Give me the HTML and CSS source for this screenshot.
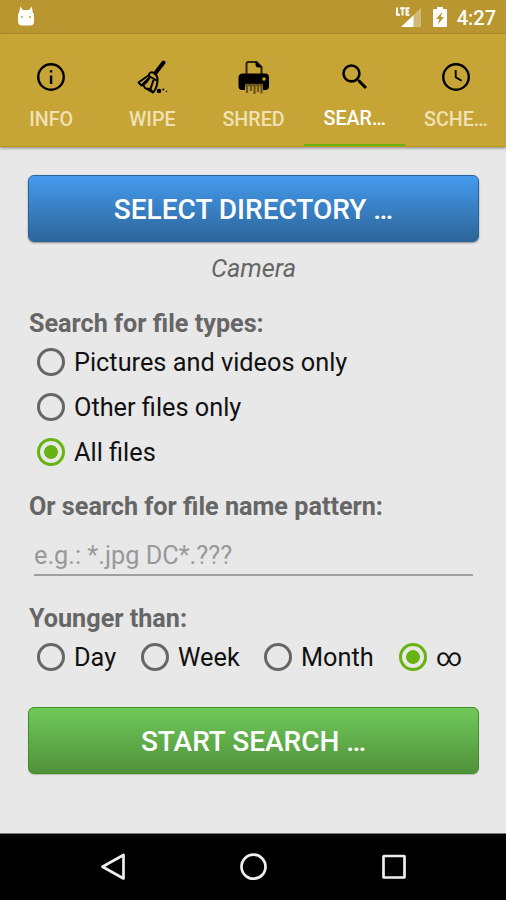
FILE: index.html
```html
<!DOCTYPE html>
<html lang="en">
<head>
<meta charset="utf-8">
<title>Search</title>
<link rel="stylesheet" href="styles.css">
</head>
<body>
<div class="screen">
  <header class="status">
    <svg class="status-cat" width="18" height="22" viewBox="0 0 18 22"><path fill="#fff" d="M3.200.5L6 4h6L14.800.5l1 6q1.200.8 1.200 2.500v6.500q0 4-4 4H5q-4 0-4-4V9q0-1.700 1.200-2.500z"/><circle cx="5" cy="11" r=".9" fill="#b9962f"/><circle cx="13" cy="11" r=".9" fill="#b9962f"/></svg>
    <div class="status-right">
      <svg width="26" height="22" viewBox="0 0 26 22"><path fill="#fff" fill-opacity=".35" d="M25 2v19H5z"/><path fill="#fff" d="M17.500 9.200V21H5z"/><path stroke="#b9962f" stroke-width="2" d="M14 0v11"/><path fill="none" stroke="#fff" stroke-width="1.900" d="M1 1.500v7.200h3M4 2.300h5M6.500 2.300v7.200M13.500 2.300h-3v6.400h3M10.500 5.500h2.600"/></svg>
      <svg class="battery" width="14" height="22" viewBox="0 0 14 22"><path fill="#fff" d="M4 1h6v2h3q1 0 1 1v16q0 1-1 1H1q-1 0-1-1V4q0-1 1-1h3z"/><path fill="#b9962f" d="M9.300 6L3 13h3.300l-1.600 5.500L11 11H7.700z"/></svg>
      <span class="time">4:27</span>
    </div>
  </header>
  <nav class="tabs">
    <div class="tab">
      <svg width="34" height="34" viewBox="0 0 24 24"><circle cx="12" cy="12" r="9" fill="none" stroke="#000" stroke-width="1.700"/><path d="M11.200 11h1.700v6h-1.700zM11.200 7.200h1.700v1.700h-1.700z"/></svg>
      <span>INFO</span>
    </div>
    <div class="tab">
      <svg width="34" height="34" viewBox="0 0 34 34" fill="none" stroke="#000" stroke-linejoin="round"><path stroke-width="4" stroke-linecap="round" d="M28.500 2.500L20.500 13"/><path stroke-width="2" d="M14 14q3-4 7 1 2 2 1.500 6l-8.500-5zM14 15L3.500 22.500l3 3L15 17M6.500 25.500q4-1 8-7.500M8.500 25.500l2 3 5 .5 3-9M15 29l3 3.500q4-4 4.500-11.500M11 28.500l6 3.500"/><circle cx="24" cy="31" r="2.300" fill="#000" stroke="none"/><circle cx="28.300" cy="29.500" r="1.100" fill="#000" stroke="none"/><circle cx="31.500" cy="31.500" r=".7" fill="#000" stroke="none"/></svg>
      <span>WIPE</span>
    </div>
    <div class="tab">
      <svg width="34" height="34" viewBox="0 0 34 34"><path fill="none" stroke="#2c2409" stroke-width="2" d="M9.500 14V4q0-2 2-2h8l5 5v7"/><path d="M18.500 1l7 6.500h-4q-3 0-3-3z"/><path d="M6 13.500h22q4 0 4 4V26q0 4-3.500 4H26v-5H8v5H5q-3.500 0-3.500-4v-8.500q0-4 4.500-4z"/><circle cx="27" cy="19" r="1.800" fill="#c6a435"/><path fill="none" stroke="#6b581b" stroke-width="2.300" d="M8 25h18M10 25v8M14 25v6M17.500 25v9M21 25v7M24.500 25v8.500"/></svg>
      <span>SHRED</span>
    </div>
    <div class="tab active">
      <svg width="34" height="34" viewBox="0 0 24 24"><path d="M15.500 14h-.79l-.28-.27A6.471 6.471 0 0 0 16 9.500 6.500 6.500 0 1 0 9.500 16c1.610 0 3.090-.59 4.230-1.570l.27.28v.79l5 4.990L20.490 19l-4.990-5zm-6 .2A4.700 4.700 0 1 1 9.500 4.800a4.700 4.700 0 0 1 0 9.400z"/></svg>
      <span>SEAR…</span>
    </div>
    <div class="tab">
      <svg width="34" height="34" viewBox="0 0 24 24" fill="none" stroke="#000"><circle cx="12" cy="12" r="9" stroke-width="1.700"/><path stroke-width="1.300" d="M11.800 7v5.200l4.200 2.500"/></svg>
      <span>SCHE…</span>
    </div>
  </nav>
  <main>
    <button class="btn blue">SELECT DIRECTORY …</button>
    <p class="folder">Camera</p>
    <h2 class="h-types">Search for file types:</h2>
    <div class="types">
      <label class="opt"><i class="radio"></i><span>Pictures and videos only</span></label>
      <label class="opt"><i class="radio"></i><span>Other files only</span></label>
      <label class="opt"><i class="radio on"></i><span>All files</span></label>
    </div>
    <h2 class="h-pattern">Or search for file name pattern:</h2>
    <div class="field">e.g.: *.jpg DC*.???</div>
    <h2 class="h-age">Younger than:</h2>
    <div class="ages">
      <label class="opt day"><i class="radio"></i><span>Day</span></label>
      <label class="opt week"><i class="radio"></i><span>Week</span></label>
      <label class="opt month"><i class="radio"></i><span>Month</span></label>
      <label class="opt"><i class="radio on"></i><span>∞</span></label>
    </div>
    <button class="btn green">START SEARCH …</button>
  </main>
  <footer class="navbar">
    <svg width="28" height="30" viewBox="0 0 28 30"><path d="M24.500 3v23.500L3.500 14.700z"/></svg>
    <svg width="28" height="30" viewBox="0 0 28 30"><circle cx="14.500" cy="14.700" r="12"/></svg>
    <svg width="28" height="30" viewBox="0 0 28 30"><rect x="4.500" y="4" width="21" height="21.500" rx=".5"/></svg>
  </footer>
</div>
</body>
</html>
```

FILE: styles.css
```css
* { box-sizing: border-box; }
body { margin: 0; font-family: Roboto, "Liberation Sans", sans-serif; background: #e8e8e8; }
.screen { width: 506px; height: 900px; display: flex; flex-direction: column; overflow: hidden; }
.status { height: 34px; background: #b9962f; display: flex; justify-content: space-between; padding: 6px 10px 0 17px; }
.status-right { display: flex; align-items: flex-start; }
.battery { margin: 0 10px 0 11px; }
.time { color: #fff; font-size: 20px; font-weight: 500; line-height: 24px; }
.tabs { height: 113px; background: #c6a435; display: flex; box-shadow: 0 1px 3px rgba(0,0,0,.45); border-bottom: 1px solid #bd9708; position: relative; }
.tab { flex: 1; display: flex; flex-direction: column; align-items: center; padding: 26px 0 0 1px; color: #f0e1b5; font-size: 19.700px; font-weight: 500; line-height: 24px; }
.tab span { margin-top: 14px; }
.tab.active { color: #fff; box-shadow: inset 0 -2px #66b312; }
.tab.active span { margin-top: 13px; }
main { height: 686px; padding: 28px 28px 0; display: flex; flex-direction: column; }
.btn { font: 500 28px/34px Roboto, sans-serif; color: #fff; width: 451px; height: 67px; flex: none; border-radius: 6px; padding: 0; }
.blue { background: linear-gradient(#459bee, #2c6599); border: 1px solid #28649b; box-shadow: 0 1px 2px rgba(0,0,0,.4); padding-top: 3px; }
.green { background: linear-gradient(#70c95a, #50913b); border: 1px solid #3d9220; box-shadow: 0 1px 1px rgba(0,0,0,.2); margin-top: 28px; padding-top: 2px; }
.folder { margin: 12px 0 0 1px; text-align: center; font-size: 25.300px; line-height: 30px; font-style: italic; color: #666; }
h2 { margin: 0 0 0 1px; font-size: 25.200px; line-height: 30px; font-weight: 700; color: #666; }
.h-types { margin-top: 25px; }
.opt { display: flex; align-items: center; height: 45px; font-size: 25.300px; line-height: 30px; color: #111; }
.opt span { padding-top: 2px; }
.types { padding-left: 9px; margin-top: 0; }
.radio { width: 28px; height: 28px; border: 3px solid #666; border-radius: 50%; flex: none; margin-right: 9px; }
.radio.on { border-color: #66b312; background: radial-gradient(circle, #66b312 6.500px, transparent 7.200px); }
.h-pattern { margin-top: 18px; }
.field { margin: 13px 5px 0 6px; height: 41px; padding-top: 6px; border-bottom: 2px solid #a0a0a0; font-size: 25.300px; line-height: 30px; color: #999; }
.h-age { margin-top: 28px; }
.ages { display: flex; padding-left: 9px; margin-top: 0; }
.day { width: 104px; } .week { width: 123px; } .month { width: 135px; }
.navbar { flex: 1; background: #000; border-top: 1px solid #777; display: flex; justify-content: center; gap: 112px; padding-top: 18px; }
.navbar svg { fill: none; stroke: #eee; stroke-width: 2.700; stroke-linejoin: round; }
```
